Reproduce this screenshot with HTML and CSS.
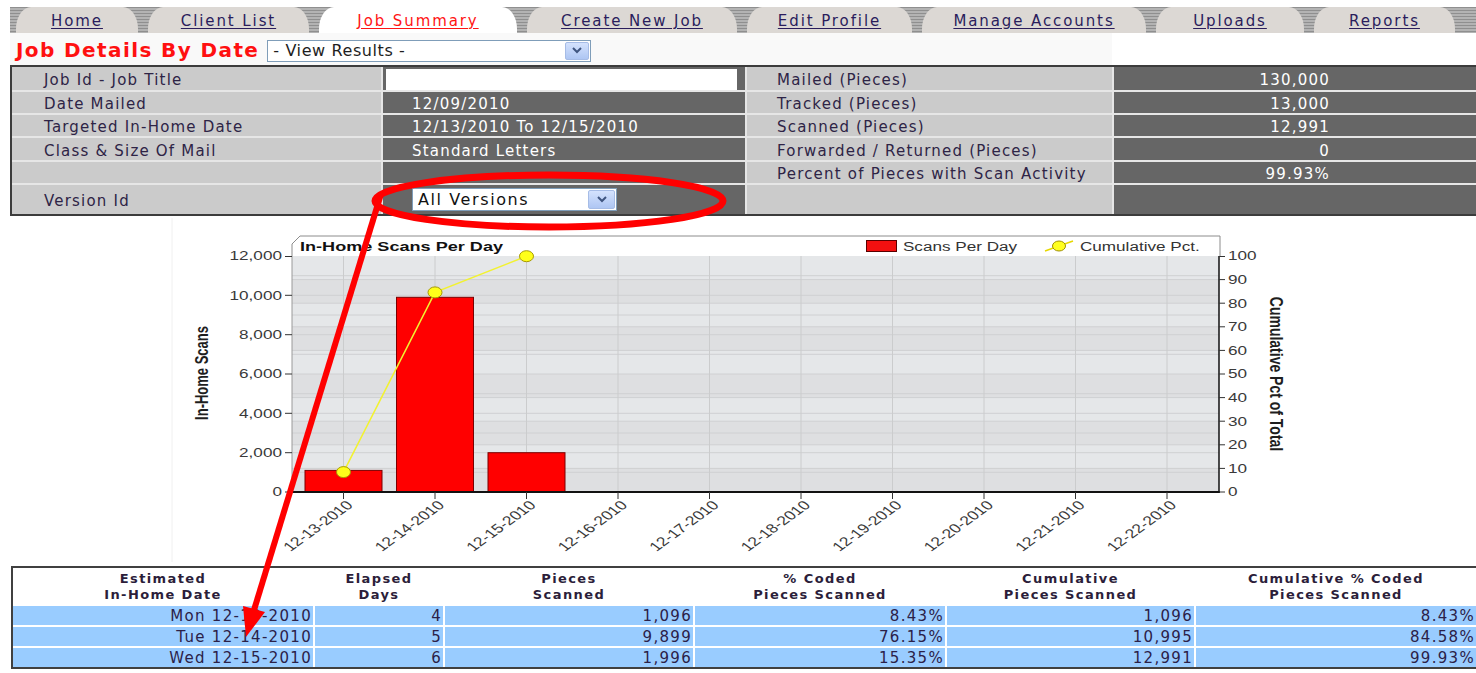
FILE: index.html
```html
<!DOCTYPE html>
<html lang="en">
<head>
<meta charset="utf-8">
<title>Job Summary - Job Details By Date</title>
<link rel="stylesheet" href="styles.css">
</head>
<body>
<div class="page">
  <nav class="tabs">
    <a class="tab t-home" href="#">Home</a>
    <a class="tab t-clients" href="#">Client List</a>
    <a class="tab t-summary active" href="#">Job Summary</a>
    <a class="tab t-create" href="#">Create New Job</a>
    <a class="tab t-profile" href="#">Edit Profile</a>
    <a class="tab t-accounts" href="#">Manage Accounts</a>
    <a class="tab t-uploads" href="#">Uploads</a>
    <a class="tab t-reports" href="#">Reports</a>
  </nav>

  <div class="titlebar">
    <h1>Job Details By Date</h1>
    <div class="dropdown results">
      <span class="dd-text">- View Results -</span>
      <span class="dd-btn"><svg width="10" height="7" viewBox="0 0 10 7"><polyline points="1,1 5,5 9,1" fill="none" stroke="#3f5580" stroke-width="2"/></svg></span>
    </div>
  </div>

  <div class="info">
    <div class="lbl">Job Id - Job Title</div>
    <div class="val entry"><div class="textbox"></div></div>
    <div class="lbl right">Mailed (Pieces)</div>
    <div class="val num">130,000</div>

    <div class="lbl">Date Mailed</div>
    <div class="val">12/09/2010</div>
    <div class="lbl right">Tracked (Pieces)</div>
    <div class="val num">13,000</div>

    <div class="lbl">Targeted In-Home Date</div>
    <div class="val">12/13/2010 To 12/15/2010</div>
    <div class="lbl right">Scanned (Pieces)</div>
    <div class="val num">12,991</div>

    <div class="lbl">Class &amp; Size Of Mail</div>
    <div class="val">Standard Letters</div>
    <div class="lbl right">Forwarded / Returned (Pieces)</div>
    <div class="val num">0</div>

    <div class="lbl"></div>
    <div class="val"></div>
    <div class="lbl right">Percent of Pieces with Scan Activity</div>
    <div class="val num">99.93%</div>

    <div class="lbl">Version Id</div>
    <div class="val select-cell">
      <div class="dropdown versions">
        <span class="dd-text">All Versions</span>
        <span class="dd-btn"><svg width="10" height="7" viewBox="0 0 10 7"><polyline points="1,1 5,5 9,1" fill="none" stroke="#3f5580" stroke-width="2"/></svg></span>
      </div>
    </div>
    <div class="lbl right"></div>
    <div class="val num"></div>
  </div>

  <svg class="chart" width="1476" height="350" viewBox="0 216 1476 350" font-family="'Liberation Sans', Arial, sans-serif">
    <line x1="172" y1="218" x2="172" y2="562" stroke="#f0f0f0"/>
    <!-- plot background bands -->
    <rect x="292" y="256" width="927" height="236" fill="#dedfe1"/>
    <g fill="#e5e7e9">
      <rect x="292" y="256" width="927" height="23.6"/>
      <rect x="292" y="303.2" width="927" height="23.6"/>
      <rect x="292" y="350.4" width="927" height="23.6"/>
      <rect x="292" y="397.6" width="927" height="23.6"/>
      <rect x="292" y="444.8" width="927" height="23.6"/>
    </g>
    <!-- horizontal grid lines -->
    <g stroke="#cfd0d2" stroke-width="1">
      <line x1="292" x2="1219" y1="275.7" y2="275.7"/>
      <line x1="292" x2="1219" y1="295.3" y2="295.3"/>
      <line x1="292" x2="1219" y1="315" y2="315"/>
      <line x1="292" x2="1219" y1="334.7" y2="334.7"/>
      <line x1="292" x2="1219" y1="354.3" y2="354.3"/>
      <line x1="292" x2="1219" y1="374" y2="374"/>
      <line x1="292" x2="1219" y1="393.7" y2="393.7"/>
      <line x1="292" x2="1219" y1="413.3" y2="413.3"/>
      <line x1="292" x2="1219" y1="433" y2="433"/>
      <line x1="292" x2="1219" y1="452.7" y2="452.7"/>
      <line x1="292" x2="1219" y1="472.3" y2="472.3"/>
      <line x1="292" x2="1219" y1="279.6" y2="279.6"/>
      <line x1="292" x2="1219" y1="303.2" y2="303.2"/>
      <line x1="292" x2="1219" y1="326.8" y2="326.8"/>
      <line x1="292" x2="1219" y1="350.4" y2="350.4"/>
      <line x1="292" x2="1219" y1="397.6" y2="397.6"/>
      <line x1="292" x2="1219" y1="421.2" y2="421.2"/>
      <line x1="292" x2="1219" y1="444.8" y2="444.8"/>
      <line x1="292" x2="1219" y1="468.4" y2="468.4"/>
    </g>
    <!-- vertical grid lines at each day -->
    <g stroke="#cbcccd" stroke-width="1">
      <line x1="343.5" x2="343.5" y1="256" y2="492"/>
      <line x1="435" x2="435" y1="256" y2="492"/>
      <line x1="526.5" x2="526.5" y1="256" y2="492"/>
      <line x1="618" x2="618" y1="256" y2="492"/>
      <line x1="709.5" x2="709.5" y1="256" y2="492"/>
      <line x1="801" x2="801" y1="256" y2="492"/>
      <line x1="892.5" x2="892.5" y1="256" y2="492"/>
      <line x1="984" x2="984" y1="256" y2="492"/>
      <line x1="1075.5" x2="1075.5" y1="256" y2="492"/>
      <line x1="1167" x2="1167" y1="256" y2="492"/>
    </g>

    <!-- title strip with legend -->
    <path d="M292,256 L292,244 L300,236 L1220,236 L1220,256" fill="#fff" stroke="#8c8c8c" stroke-width="1"/>
    <rect x="866.5" y="240.5" width="30" height="11" fill="#f31010" stroke="#5a0000"/>
    <line x1="1045" y1="251" x2="1073" y2="241" stroke="#e6d800" stroke-width="1.5"/>
    <ellipse cx="1059" cy="246" rx="6.5" ry="5" fill="#ffff20" stroke="#a09000"/>
    <g transform="scale(1.37 1)" fill="#333" font-size="12.5">
      <text x="219" y="251" font-weight="bold" font-size="13.2" fill="#111">In-Home Scans Per Day</text>
      <text x="659.1" y="251">Scans Per Day</text>
      <text x="788.3" y="251">Cumulative Pct.</text>
    </g>

    <!-- bars: scans per day -->
    <g fill="#ff0000" stroke="#7a0000" stroke-width="1">
      <rect x="305" y="470.4" width="77" height="21.6"/>
      <rect x="396.5" y="297.3" width="77" height="194.7"/>
      <rect x="488" y="452.7" width="77" height="39.3"/>
    </g>

    <!-- cumulative percentage line -->
    <polyline points="343.5,472.1 435,292.4 526.5,256.2" fill="none" stroke="#f2f230" stroke-width="1.5"/>
    <g fill="#ffff1a" stroke="#a89a00" stroke-width="1">
      <ellipse cx="343.5" cy="472.1" rx="7" ry="5.5"/>
      <ellipse cx="435" cy="292.4" rx="7" ry="5.5"/>
      <ellipse cx="526.5" cy="256.2" rx="7" ry="5.5"/>
    </g>

    <!-- axes -->
    <line x1="292" y1="256" x2="292" y2="492" stroke="#9a9a9a"/>
    <line x1="1219" y1="256" x2="1219" y2="493" stroke="#111" stroke-width="1.5"/>
    <line x1="292" y1="492" x2="1220" y2="492" stroke="#111" stroke-width="2"/>
    <g stroke="#333" stroke-width="1">
      <line x1="285" x2="292" y1="256.5" y2="256.5"/>
      <line x1="285" x2="292" y1="295.3" y2="295.3"/>
      <line x1="285" x2="292" y1="334.7" y2="334.7"/>
      <line x1="285" x2="292" y1="374" y2="374"/>
      <line x1="285" x2="292" y1="413.3" y2="413.3"/>
      <line x1="285" x2="292" y1="452.7" y2="452.7"/>
      <line x1="285" x2="292" y1="492" y2="492"/>
      <line x1="1219" x2="1225" y1="256.5" y2="256.5"/>
      <line x1="1219" x2="1225" y1="279.6" y2="279.6"/>
      <line x1="1219" x2="1225" y1="303.2" y2="303.2"/>
      <line x1="1219" x2="1225" y1="326.8" y2="326.8"/>
      <line x1="1219" x2="1225" y1="350.4" y2="350.4"/>
      <line x1="1219" x2="1225" y1="374" y2="374"/>
      <line x1="1219" x2="1225" y1="397.6" y2="397.6"/>
      <line x1="1219" x2="1225" y1="421.2" y2="421.2"/>
      <line x1="1219" x2="1225" y1="444.8" y2="444.8"/>
      <line x1="1219" x2="1225" y1="468.4" y2="468.4"/>
      <line x1="1219" x2="1225" y1="492" y2="492"/>
      <line x1="343.5" x2="343.5" y1="492" y2="499"/>
      <line x1="435" x2="435" y1="492" y2="499"/>
      <line x1="526.5" x2="526.5" y1="492" y2="499"/>
      <line x1="618" x2="618" y1="492" y2="499"/>
      <line x1="709.5" x2="709.5" y1="492" y2="499"/>
      <line x1="801" x2="801" y1="492" y2="499"/>
      <line x1="892.5" x2="892.5" y1="492" y2="499"/>
      <line x1="984" x2="984" y1="492" y2="499"/>
      <line x1="1075.5" x2="1075.5" y1="492" y2="499"/>
      <line x1="1167" x2="1167" y1="492" y2="499"/>
    </g>

    <!-- axis value labels -->
    <g transform="scale(1.37 1)" fill="#3a3a3a" font-size="12.5">
      <g text-anchor="end">
        <text x="205.8" y="260.5">12,000</text>
        <text x="205.8" y="299.8">10,000</text>
        <text x="205.8" y="339.2">8,000</text>
        <text x="205.8" y="378.5">6,000</text>
        <text x="205.8" y="417.8">4,000</text>
        <text x="205.8" y="457.2">2,000</text>
        <text x="205.8" y="496.5">0</text>
      </g>
      <text x="896.4" y="260.5">100</text>
      <text x="896.4" y="284.1">90</text>
      <text x="896.4" y="307.7">80</text>
      <text x="896.4" y="331.3">70</text>
      <text x="896.4" y="354.9">60</text>
      <text x="896.4" y="378.5">50</text>
      <text x="896.4" y="402.1">40</text>
      <text x="896.4" y="425.7">30</text>
      <text x="896.4" y="449.3">20</text>
      <text x="896.4" y="472.9">10</text>
      <text x="896.4" y="496.5">0</text>
    </g>

    <!-- day labels -->
    <g fill="#3a3a3a" font-size="12.8" text-anchor="end">
      <text transform="translate(350 503) scale(1.37 1) rotate(-45)" y="4">12-13-2010</text>
      <text transform="translate(441.5 503) scale(1.37 1) rotate(-45)" y="4">12-14-2010</text>
      <text transform="translate(533 503) scale(1.37 1) rotate(-45)" y="4">12-15-2010</text>
      <text transform="translate(624.5 503) scale(1.37 1) rotate(-45)" y="4">12-16-2010</text>
      <text transform="translate(716 503) scale(1.37 1) rotate(-45)" y="4">12-17-2010</text>
      <text transform="translate(807.5 503) scale(1.37 1) rotate(-45)" y="4">12-18-2010</text>
      <text transform="translate(899 503) scale(1.37 1) rotate(-45)" y="4">12-19-2010</text>
      <text transform="translate(990.5 503) scale(1.37 1) rotate(-45)" y="4">12-20-2010</text>
      <text transform="translate(1082 503) scale(1.37 1) rotate(-45)" y="4">12-21-2010</text>
      <text transform="translate(1173.5 503) scale(1.37 1) rotate(-45)" y="4">12-22-2010</text>
    </g>

    <!-- axis titles -->
    <text transform="translate(208 373) scale(1.37 1) rotate(-90)" text-anchor="middle" font-size="13" font-weight="bold" fill="#1e1e1e">In-Home Scans</text>
    <text transform="translate(1270 374) scale(1.37 1) rotate(90)" text-anchor="middle" font-size="14" font-weight="bold" fill="#1e1e1e">Cumulative Pct of Total</text>
  </svg>

  <div class="days">
    <div class="hd">Estimated<br>In-Home Date</div>
    <div class="hd">Elapsed<br>Days</div>
    <div class="hd">Pieces<br>Scanned</div>
    <div class="hd">% Coded<br>Pieces Scanned</div>
    <div class="hd">Cumulative<br>Pieces Scanned</div>
    <div class="hd">Cumulative % Coded<br>Pieces Scanned</div>

    <div class="cell">Mon 12-13-2010</div>
    <div class="cell">4</div>
    <div class="cell">1,096</div>
    <div class="cell">8.43%</div>
    <div class="cell">1,096</div>
    <div class="cell">8.43%</div>

    <div class="cell">Tue 12-14-2010</div>
    <div class="cell">5</div>
    <div class="cell">9,899</div>
    <div class="cell">76.15%</div>
    <div class="cell">10,995</div>
    <div class="cell">84.58%</div>

    <div class="cell">Wed 12-15-2010</div>
    <div class="cell">6</div>
    <div class="cell">1,996</div>
    <div class="cell">15.35%</div>
    <div class="cell">12,991</div>
    <div class="cell">99.93%</div>
  </div>

  <!-- red pen markup circling the version selector -->
  <svg class="markup" width="1476" height="673" viewBox="0 0 1476 673">
    <ellipse cx="549" cy="201" rx="174" ry="26" fill="none" stroke="#ff0000" stroke-width="7"/>
    <line x1="381" y1="194" x2="254" y2="610" stroke="#ff0000" stroke-width="6"/>
    <polygon points="246,637 265,612 243,606" fill="#ff0000"/>
  </svg>
</div>
</body>
</html>
```

FILE: styles.css
```css
* {
  box-sizing: border-box;
}

html,
body {
  margin: 0;
  padding: 0;
  background: #ffffff;
}

body {
  width: 1476px;
  height: 673px;
  overflow: hidden;
  font-family: "DejaVu Sans", "Liberation Sans", sans-serif;
  color: #2e2446;
}

.page {
  position: relative;
  padding-top: 7px;
}

/* ---------- tab strip ---------- */
.tabs {
  display: flex;
  gap: 10px;
  height: 26px;
  margin-left: 10px;
  padding-left: 6px;
  background: repeating-linear-gradient(to bottom, #8f8f8f 0 1px, #b3b3b3 1px 3px);
}

.tab {
  flex: none;
  display: block;
  height: 26px;
  line-height: 28px;
  text-align: center;
  background: #dcd8d4;
  border-radius: 15px 15px 0 0 / 22px 22px 0 0;
  font-size: 15px;
  letter-spacing: 1.9px;
  color: #2a1d5c;
  text-decoration: underline;
  text-underline-offset: 2px;
}

.tab.active {
  background: #ffffff;
  color: #ff1414;
}

.t-home { width: 122px; }
.t-clients { width: 161px; }
.t-summary { width: 198px; }
.t-create { width: 210px; }
.t-profile { width: 165px; }
.t-accounts { width: 224px; }
.t-uploads { width: 148px; }
.t-reports { width: 141px; }

/* ---------- page title ---------- */
.titlebar {
  display: flex;
  align-items: center;
  width: 1102px;
  height: 32px;
  margin-left: 10px;
  background: #f9f9f9;
}

h1 {
  margin: 2px 8px 0 6px;
  font-size: 20px;
  font-weight: bold;
  letter-spacing: 1.4px;
  color: #ff1010;
}

.dropdown {
  display: flex;
  align-items: center;
  justify-content: space-between;
  background: #ffffff;
  border: 1px solid #7f9db9;
  color: #1e1e1e;
}

.dropdown.results {
  width: 324px;
  height: 22px;
  margin-top: 3px;
  padding: 0 1px 0 5px;
  font-size: 16px;
  letter-spacing: 0.6px;
}

.dropdown.versions {
  width: 205px;
  height: 23px;
  padding: 0 1px 0 5px;
  font-size: 16px;
  letter-spacing: 1.6px;
  color: #111;
}

.dd-btn {
  display: flex;
  align-items: center;
  justify-content: center;
  width: 24px;
  height: 18px;
  border: 1px solid #a6bce6;
  border-radius: 2px;
  background: linear-gradient(#d4e2fd, #aec6f3);
}

.versions .dd-btn {
  width: 27px;
  height: 19px;
}

/* ---------- job info grid ---------- */
.info {
  display: grid;
  grid-template-columns: 369px 362px 365px 1fr;
  grid-template-rows: 23px 21px 21px 22px 21px 29px;
  gap: 2px;
  margin-left: 10px;
  background: #e6e6e6;
  border: 2px solid #3c3c3c;
  border-right: none;
  font-size: 15px;
  letter-spacing: 1.2px;
}

.lbl,
.val {
  display: flex;
  align-items: center;
  padding-top: 3px;
  white-space: nowrap;
}

.lbl {
  padding-left: 32px;
  background: #cbcbcb;
  color: #2e2446;
}

.lbl.right {
  padding-left: 30px;
}

.val {
  padding-left: 29px;
  background: #666666;
  color: #ffffff;
}

.val.num {
  justify-content: flex-end;
  padding-left: 0;
  padding-right: 146px;
}

.val.entry {
  align-items: flex-start;
  padding: 2px 0 0 3px;
}

.val.select-cell {
  padding-top: 0;
}

.textbox {
  width: 351px;
  height: 21px;
  background: #ffffff;
}

/* ---------- chart ---------- */
.chart {
  display: block;
}

/* ---------- per-day table ---------- */
.days {
  display: grid;
  grid-template-columns: 300px 128px 248px 250px 247px 1fr;
  grid-template-rows: 36px 19px 19px 19px;
  gap: 2px;
  margin-left: 11px;
  background: #ffffff;
  border: 2px solid #404040;
  border-right: none;
}

.hd {
  display: flex;
  align-items: center;
  justify-content: center;
  text-align: center;
  padding-top: 1px;
  background: #ffffff;
  font-size: 13px;
  font-weight: bold;
  line-height: 16px;
  letter-spacing: 1.4px;
  color: #2c1e3a;
}

.cell {
  background: #99ccff;
  text-align: right;
  padding-right: 1px;
  font-size: 15px;
  line-height: 20px;
  letter-spacing: 1.3px;
  color: #2b2148;
  white-space: nowrap;
}

/* ---------- pen markup layer ---------- */
.markup {
  position: absolute;
  left: 0;
  top: 0;
  pointer-events: none;
}
```
